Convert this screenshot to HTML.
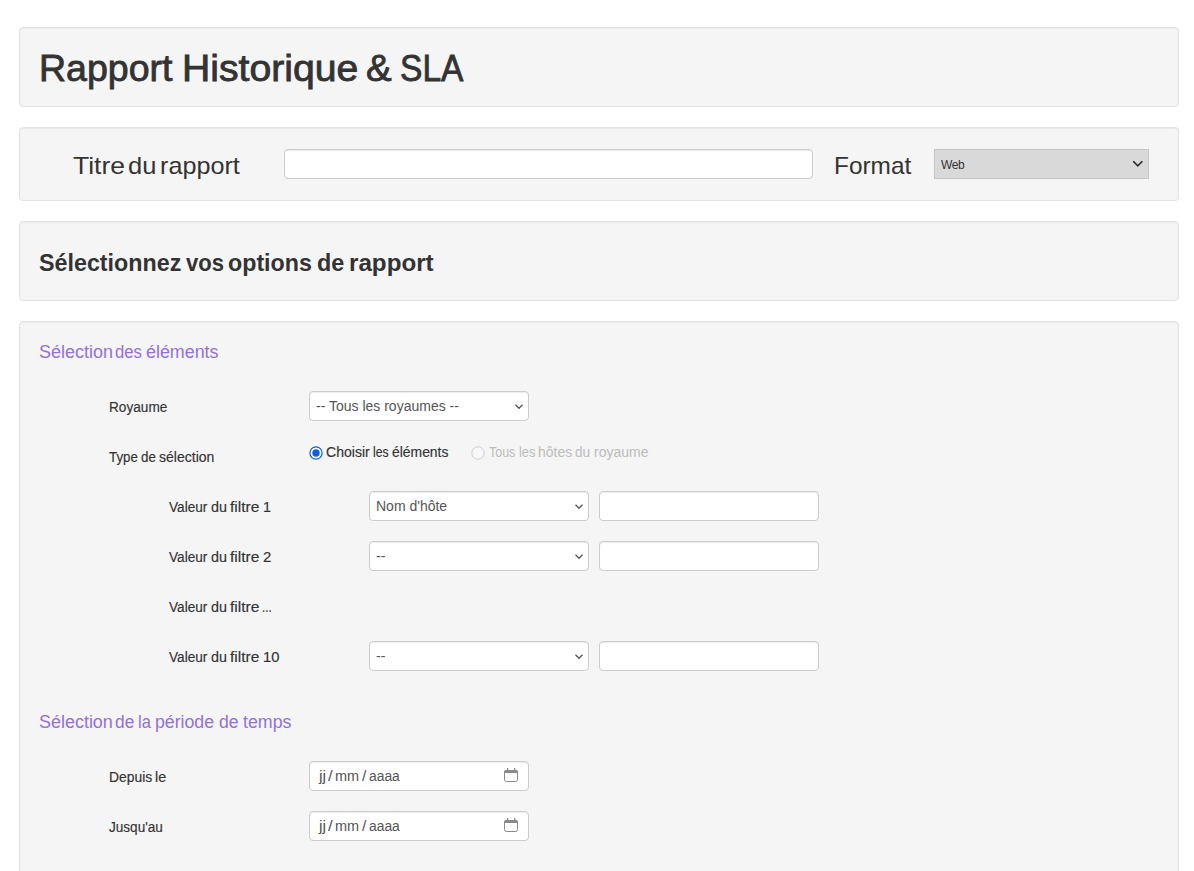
<!DOCTYPE html>
<html lang="fr">
<head>
<meta charset="utf-8">
<title>Rapport Historique &amp; SLA</title>
<style>
*{box-sizing:border-box;}
html,body{margin:0;padding:0;background:#fff;}
body{width:1194px;height:871px;overflow:hidden;position:relative;font-family:"Liberation Sans",sans-serif;font-size:14px;color:#333;}
.well{position:absolute;left:19px;width:1160px;background:#f5f5f5;border:1px solid #e3e3e3;border-radius:4px;box-shadow:inset 0 1px 1px rgba(0,0,0,.05);}
.t{position:absolute;left:0;white-space:nowrap;line-height:1;margin:0;padding:0;font-family:"Liberation Sans",sans-serif;}
.w{position:absolute;top:0;white-space:nowrap;transform-origin:0 0;}
select.fc,input.fc,.fc{position:absolute;height:30px;width:220px;border:1px solid #ccc;border-radius:4px;background:#fff;box-shadow:inset 0 1px 1px rgba(0,0,0,.075);font-family:"Liberation Sans",sans-serif;font-size:14px;color:#555;margin:0;}
select.fc{padding:0 0 0 6px;-webkit-appearance:none;appearance:none;}
.chev{position:absolute;pointer-events:none;}
.rad{position:absolute;pointer-events:none;}
input.fc{padding:4px 6px;}
#fmt{position:absolute;left:934px;top:149px;width:215px;height:30px;border:1px solid #c6c6c6;border-radius:0;background:#d9d9d9;font-family:"Liberation Sans",sans-serif;font-size:12px;color:#333;padding:2px 0 0 6px;letter-spacing:-0.4px;margin:0;-webkit-appearance:none;appearance:none;}
input[type=radio]{position:absolute;margin:0;width:13px;height:13px;opacity:0;}
.date{padding:0;}
.date svg{position:absolute;left:193px;top:5px;}
</style>
</head>
<body>

<div class="well" style="top:27px;height:80px;"></div>
<h1 class="t" style="top:51px;font-size:36px;color:#333;font-weight:normal;-webkit-text-stroke:0.8px #333;"><span class="w" style="left:39.2px;transform:scaleX(1.042)">Rapport</span> <span class="w" style="left:181.6px;transform:scaleX(1.088)">Historique</span> <span class="w" style="left:365.9px;transform:scaleX(1.068)">&amp;</span> <span class="w" style="left:399.8px;transform:scaleX(0.932)">SLA</span></h1>

<div class="well" style="top:127px;height:74px;"></div>
<label class="t" style="top:154px;font-size:24px;color:#333;font-weight:normal;"><span class="w" style="left:72.8px;transform:scaleX(1.105)">Titre</span> <span class="w" style="left:128.4px;transform:scaleX(1.062)">du</span> <span class="w" style="left:160.2px;transform:scaleX(1.049)">rapport</span></label>
<input class="fc" type="text" style="left:284px;top:149px;width:529px;">
<label class="t" style="top:154px;font-size:24px;color:#333;font-weight:normal;"><span class="w" style="left:834.4px;transform:scaleX(1.016)">Format</span></label>
<select id="fmt"><option>Web</option><option>PDF</option><option>CSV</option></select><svg class="chev" style="left:1130px;top:158px" width="16" height="12" viewBox="0 0 16 12"><polyline points="3.2,3.2 7.8,7.8 12.4,3.2" fill="none" stroke="#2a2a2a" stroke-width="1.6"/></svg>

<div class="well" style="top:221px;height:80px;"></div>
<h3 class="t" style="top:251px;font-size:24px;color:#333;font-weight:bold;"><span class="w" style="left:38.9px;transform:scaleX(0.970)">Sélectionnez</span> <span class="w" style="left:186.1px;transform:scaleX(0.920)">vos</span> <span class="w" style="left:228.2px;transform:scaleX(0.968)">options</span> <span class="w" style="left:317.2px;transform:scaleX(0.975)">de</span> <span class="w" style="left:349.3px;transform:scaleX(1.008)">rapport</span></h3>

<div class="well" style="top:321px;height:600px;"></div>
<h4 class="t" style="top:343px;font-size:18px;color:#9370db;font-weight:normal;"><span class="w" style="left:38.6px;transform:scaleX(0.999)">Sélection</span> <span class="w" style="left:115.2px;transform:scaleX(0.927)">des</span> <span class="w" style="left:145.7px;transform:scaleX(0.992)">éléments</span></h4>

<label class="t" style="top:400px;font-size:14px;color:#333;font-weight:normal;-webkit-text-stroke:0.15px #333;"><span class="w" style="left:108.5px;transform:scaleX(0.973)">Royaume</span></label>
<select class="fc" style="left:309px;top:391px;"><option>-- Tous les royaumes --</option></select><svg class="chev" style="left:512px;top:402px" width="14" height="10" viewBox="0 0 14 10"><polyline points="3.5,2.7 7,6.3 10.5,2.7" fill="none" stroke="#555" stroke-width="1.3"/></svg>

<label class="t" style="top:450px;font-size:14px;color:#333;font-weight:normal;-webkit-text-stroke:0.15px #333;"><span class="w" style="left:109px;transform:scaleX(0.949)">Type</span> <span class="w" style="left:141px;transform:scaleX(0.952)">de</span> <span class="w" style="left:159.2px;transform:scaleX(1.003)">sélection</span></label>
<input type="radio" name="seltype" checked style="left:310px;top:447px;"><svg class="rad" style="left:308px;top:445px" width="16" height="16" viewBox="0 0 16 16"><circle cx="8" cy="8" r="6.1" fill="#fff" stroke="#0a60de" stroke-width="1.2"/><circle cx="8" cy="8" r="3.7" fill="#0a60de"/></svg>
<label class="t" style="top:445px;font-size:14px;color:#333;font-weight:normal;-webkit-text-stroke:0.15px #333;"><span class="w" style="left:325.5px;transform:scaleX(1.005)">Choisir</span> <span class="w" style="left:373px;transform:scaleX(0.872)">les</span> <span class="w" style="left:392.1px;transform:scaleX(0.993)">éléments</span></label>
<input type="radio" name="seltype" disabled style="left:472px;top:447px;"><svg class="rad" style="left:470px;top:445px" width="16" height="16" viewBox="0 0 16 16"><circle cx="8" cy="8" r="6.2" fill="#f8f8f8" stroke="#cdcdd6" stroke-width="1"/></svg>
<label class="t" style="top:445px;font-size:14px;color:#bcbcbc;font-weight:normal;"><span class="w" style="left:489.1px;transform:scaleX(0.890)">Tous</span> <span class="w" style="left:518.6px;transform:scaleX(0.923)">les</span> <span class="w" style="left:537.7px;transform:scaleX(0.998)">hôtes</span> <span class="w" style="left:575.4px;transform:scaleX(0.975)">du</span> <span class="w" style="left:593.5px;transform:scaleX(1.001)">royaume</span></label>

<label class="t" style="top:500px;font-size:14px;color:#333;font-weight:normal;-webkit-text-stroke:0.15px #333;"><span class="w" style="left:169.2px;transform:scaleX(0.973)">Valeur</span> <span class="w" style="left:211.4px;transform:scaleX(1.025)">du</span> <span class="w" style="left:230.4px;transform:scaleX(1.108)">filtre</span> <span class="w" style="left:263.2px;transform:scaleX(1.024)">1</span></label>
<select class="fc" style="left:369px;top:491px;"><option>Nom d'hôte</option></select><svg class="chev" style="left:572px;top:502px" width="14" height="10" viewBox="0 0 14 10"><polyline points="3.5,2.7 7,6.3 10.5,2.7" fill="none" stroke="#555" stroke-width="1.3"/></svg>
<input class="fc" type="text" style="left:599px;top:491px;">

<label class="t" style="top:550px;font-size:14px;color:#333;font-weight:normal;-webkit-text-stroke:0.15px #333;"><span class="w" style="left:169.2px;transform:scaleX(0.973)">Valeur</span> <span class="w" style="left:211.4px;transform:scaleX(1.025)">du</span> <span class="w" style="left:230.4px;transform:scaleX(1.108)">filtre</span> <span class="w" style="left:262.9px;transform:scaleX(1.067)">2</span></label>
<select class="fc" style="left:369px;top:541px;"><option>--</option></select><svg class="chev" style="left:572px;top:552px" width="14" height="10" viewBox="0 0 14 10"><polyline points="3.5,2.7 7,6.3 10.5,2.7" fill="none" stroke="#555" stroke-width="1.3"/></svg>
<input class="fc" type="text" style="left:599px;top:541px;">

<label class="t" style="top:600px;font-size:14px;color:#333;font-weight:normal;-webkit-text-stroke:0.15px #333;"><span class="w" style="left:169.2px;transform:scaleX(0.973)">Valeur</span> <span class="w" style="left:211.4px;transform:scaleX(1.025)">du</span> <span class="w" style="left:230.4px;transform:scaleX(1.108)">filtre</span> <span class="w" style="left:262.4px;transform:scaleX(0.832)">...</span></label>

<label class="t" style="top:650px;font-size:14px;color:#333;font-weight:normal;-webkit-text-stroke:0.15px #333;"><span class="w" style="left:169.2px;transform:scaleX(0.973)">Valeur</span> <span class="w" style="left:211.4px;transform:scaleX(1.025)">du</span> <span class="w" style="left:230.4px;transform:scaleX(1.108)">filtre</span> <span class="w" style="left:262.8px;transform:scaleX(1.053)">10</span></label>
<select class="fc" style="left:369px;top:641px;"><option>--</option></select><svg class="chev" style="left:572px;top:652px" width="14" height="10" viewBox="0 0 14 10"><polyline points="3.5,2.7 7,6.3 10.5,2.7" fill="none" stroke="#555" stroke-width="1.3"/></svg>
<input class="fc" type="text" style="left:599px;top:641px;">

<h4 class="t" style="top:713px;font-size:18px;color:#9370db;font-weight:normal;"><span class="w" style="left:38.7px;transform:scaleX(0.997)">Sélection</span> <span class="w" style="left:115.4px;transform:scaleX(0.962)">de</span> <span class="w" style="left:138.4px;transform:scaleX(0.918)">la</span> <span class="w" style="left:155.4px;transform:scaleX(0.983)">période</span> <span class="w" style="left:218.8px;transform:scaleX(0.973)">de</span> <span class="w" style="left:243.2px;transform:scaleX(0.988)">temps</span></h4>

<label class="t" style="top:770px;font-size:14px;color:#333;font-weight:normal;-webkit-text-stroke:0.15px #333;"><span class="w" style="left:108.5px;transform:scaleX(0.992)">Depuis</span> <span class="w" style="left:154.5px;transform:scaleX(1.026)">le</span></label>
<div class="fc date" style="left:309px;top:761px;">
<svg width="16" height="16" viewBox="0 0 16 16"><rect x="1.5" y="3.5" width="13" height="11" rx="2" fill="none" stroke="#8a8a8a" stroke-width="1"/><path d="M1 6V5a2 2 0 0 1 2-2h10a2 2 0 0 1 2 2v1z" fill="#8a8a8a"/><rect x="4" y="1" width="1.3" height="3" fill="#8a8a8a"/><rect x="11" y="1" width="1.3" height="3" fill="#8a8a8a"/></svg></div>
<span class="t" style="top:769px;font-size:14px;color:#555;font-weight:normal;"><span class="w" style="left:318.8px;transform:scaleX(1.145)">jj</span> <span class="w" style="left:328.1px;transform:scaleX(1.200)">/</span> <span class="w" style="left:334.8px;transform:scaleX(1.033)">mm</span> <span class="w" style="left:361.5px;transform:scaleX(1.120)">/</span> <span class="w" style="left:368.5px;transform:scaleX(0.989)">aaaa</span></span>

<label class="t" style="top:820px;font-size:14px;color:#333;font-weight:normal;-webkit-text-stroke:0.15px #333;"><span class="w" style="left:109px;transform:scaleX(0.969)">Jusqu'au</span></label>
<div class="fc date" style="left:309px;top:811px;">
<svg width="16" height="16" viewBox="0 0 16 16"><rect x="1.5" y="3.5" width="13" height="11" rx="2" fill="none" stroke="#8a8a8a" stroke-width="1"/><path d="M1 6V5a2 2 0 0 1 2-2h10a2 2 0 0 1 2 2v1z" fill="#8a8a8a"/><rect x="4" y="1" width="1.3" height="3" fill="#8a8a8a"/><rect x="11" y="1" width="1.3" height="3" fill="#8a8a8a"/></svg></div>
<span class="t" style="top:819px;font-size:14px;color:#555;font-weight:normal;"><span class="w" style="left:318.8px;transform:scaleX(1.145)">jj</span> <span class="w" style="left:328.1px;transform:scaleX(1.200)">/</span> <span class="w" style="left:334.8px;transform:scaleX(1.033)">mm</span> <span class="w" style="left:361.5px;transform:scaleX(1.120)">/</span> <span class="w" style="left:368.5px;transform:scaleX(0.989)">aaaa</span></span>

</body>
</html>
